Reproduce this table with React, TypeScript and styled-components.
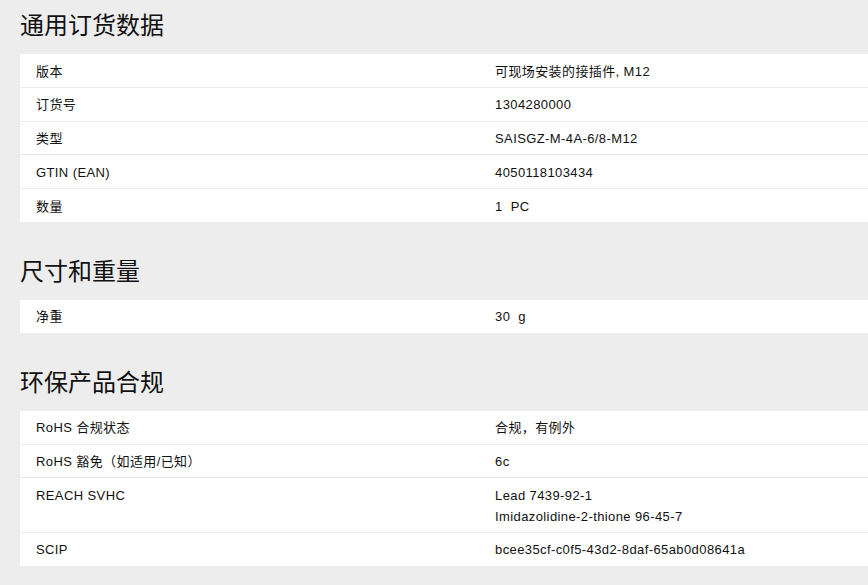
import React from "react";
import styled, { createGlobalStyle } from "styled-components";

const GlobalStyle = createGlobalStyle`
  html, body {
    margin: 0;
    padding: 0;
    background: #ededed;
  }
  body {
    font-family: "Liberation Sans", "Noto Sans CJK SC", sans-serif;
    color: #000;
    overflow: hidden;
  }
`;

const Page = styled.div`
  padding: 8px 0 0 20px;
  display: flex;
  flex-direction: column;
`;

const Section = styled.section`
  display: flex;
  flex-direction: column;
  & + & {
    margin-top: 32px;
  }
`;

const Heading = styled.h2`
  margin: 0 0 14px 0;
  font-family: "Noto Sans CJK SC", "Liberation Sans", sans-serif;
  font-size: 24px;
  font-weight: 400;
  line-height: 32px;
  color: #111;
`;

const Table = styled.div`
  background: #fff;
  display: flex;
  flex-direction: column;
`;

const Row = styled.div`
  display: grid;
  grid-template-columns: 459px 1fr;
  border-bottom: 1px solid #ebebeb;
  &:last-child {
    border-bottom: none;
  }
`;

const Cell = styled.div`
  padding: 7.5px 16px 4.5px;
  font-size: 13px;
  line-height: 20.8px;
  letter-spacing: 0.4px;
  color: #111;
  display: flex;
  flex-direction: column;
`;

type Item = { label: string; value: string[] };

const sections: { title: string; items: Item[] }[] = [
  {
    title: "通用订货数据",
    items: [
      { label: "版本", value: ["可现场安装的接插件, M12"] },
      { label: "订货号", value: ["1304280000"] },
      { label: "类型", value: ["SAISGZ-M-4A-6/8-M12"] },
      { label: "GTIN (EAN)", value: ["4050118103434"] },
      { label: "数量", value: ["1\u00a0\u00a0PC"] },
    ],
  },
  {
    title: "尺寸和重量",
    items: [{ label: "净重", value: ["30\u00a0\u00a0g"] }],
  },
  {
    title: "环保产品合规",
    items: [
      { label: "RoHS 合规状态", value: ["合规，有例外"] },
      { label: "RoHS 豁免（如适用/已知）", value: ["6c"] },
      {
        label: "REACH SVHC",
        value: ["Lead 7439-92-1", "Imidazolidine-2-thione 96-45-7"],
      },
      { label: "SCIP", value: ["bcee35cf-c0f5-43d2-8daf-65ab0d08641a"] },
    ],
  },
];

export default function App() {
  return (
    <>
      <GlobalStyle />
      <Page>
        {sections.map((s) => (
          <Section key={s.title}>
            <Heading>{s.title}</Heading>
            <Table>
              {s.items.map((it) => (
                <Row key={it.label}>
                  <Cell>{it.label}</Cell>
                  <Cell>
                    {it.value.map((v) => (
                      <span key={v}>{v}</span>
                    ))}
                  </Cell>
                </Row>
              ))}
            </Table>
          </Section>
        ))}
      </Page>
    </>
  );
}
